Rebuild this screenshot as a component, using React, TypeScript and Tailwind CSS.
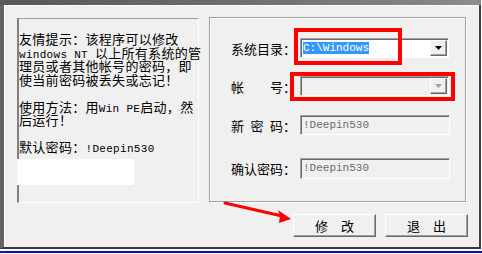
import React from "react";

const cjk = "font-['SimSun','Noto_Sans_CJK_SC',sans-serif]";

function Mono({ children }: { children: React.ReactNode }) {
  return <span className="font-['Liberation_Mono',monospace] text-[11px]">{children}</span>;
}

function Line({ children }: { children?: React.ReactNode }) {
  return <div className="h-[13.5px] leading-[13.5px]">{children}</div>;
}

function Label({ chars }: { chars: string[] }) {
  return (
    <div className="w-[69px] flex text-[13px] leading-[13px]">
      <span className="w-[52px] flex justify-between">
        {chars.map((c, i) => (
          <span key={i}>{c}</span>
        ))}
      </span>
      <span>：</span>
    </div>
  );
}

function DropButton({ disabled = false }: { disabled?: boolean }) {
  return (
    <div className="w-[17px] h-full bg-[#f0f0f0] border border-t-white border-l-white border-r-[#696969] border-b-[#696969] shadow-[inset_-1px_-1px_0_#a0a0a0] flex items-center justify-center">
      <svg width="7" height="4" viewBox="0 0 7 4">
        <polygon points="0,0 7,0 3.5,4" fill={disabled ? "#a0a0a0" : "#000"} />
      </svg>
    </div>
  );
}

function Combo({ disabled = false, children }: { disabled?: boolean; children?: React.ReactNode }) {
  return (
    <div
      className={`w-[149px] h-full flex border border-t-[#a0a0a0] border-l-[#a0a0a0] border-r-white border-b-white shadow-[inset_1px_1px_0_#696969] p-[1px] ${
        disabled ? "bg-[#f0f0f0]" : "bg-white"
      }`}
    >
      <div className="flex-1 flex items-center">{children}</div>
      <DropButton disabled={disabled} />
    </div>
  );
}

function Edit({ value }: { value: string }) {
  return (
    <div className="w-[150px] h-full flex items-center pl-[2px] bg-[#f0f0f0] border border-t-[#a0a0a0] border-l-[#a0a0a0] border-r-white border-b-white shadow-[inset_1px_1px_0_#696969] text-[#6d6d6d]">
      <Mono>{value}</Mono>
    </div>
  );
}

function WinButton({ children }: { children: React.ReactNode }) {
  return (
    <div className="w-[83px] h-[23px] bg-[#f0f0f0] border border-t-white border-l-white border-r-[#696969] border-b-[#696969] shadow-[inset_-1px_-1px_0_#a0a0a0] flex items-center justify-center text-[13px] leading-[13px]">
      {children}
    </div>
  );
}

export default function App() {
  return (
    <div className={`w-[482px] h-[254px] bg-white relative overflow-hidden text-black ${cjk}`}>
      <div className="w-[481px] h-[249px] flex flex-col">
        <div className="h-[5px] bg-gradient-to-r from-[#585858] via-[#6e6e6e] to-[#8c8c8c]" />
        <div className="flex-1 flex flex-col bg-[#f0f0f0] border-l-[4px] border-l-[#646464] border-r-[2px] border-r-[#404040] border-b-[2px] border-b-[#3a3a3a] shadow-[inset_1px_1px_0_#fff]">
          <div className="flex items-start pt-[12px] pl-[13px]">
            {/* left info box */}
            <div className="mt-[1px] w-[182px] h-[185px] border-t border-t-[#a0a0a0] border-l-2 border-l-[#808080] border-r border-r-white border-b border-b-white pt-[13px] text-[13px] tracking-[0.3px] whitespace-nowrap">
              <Line>友情提示：该程序可以修改</Line>
              <Line>
                <Mono>windows NT </Mono>以上所有系统的管
              </Line>
              <Line>理员或者其他帐号的密码，即</Line>
              <Line>使当前密码被丢失或忘记！</Line>
              <Line />
              <Line>
                使用方法：用<Mono>Win PE</Mono>启动，然
              </Line>
              <Line>后运行！</Line>
              <Line />
              <Line>
                默认密码：<Mono>!Deepin530</Mono>
              </Line>
            </div>

            {/* right form box */}
            <div className="ml-[10px] w-[257px] h-[185px] border border-[#a0a0a0] shadow-[inset_1px_1px_0_#fff,1px_1px_0_#fff] pl-[21px] pt-[20px] flex flex-col">
              <div className="flex items-center h-[20px]">
                <Label chars={["系", "统", "目", "录"]} />
                <Combo>
                  <span className="ml-[1px] bg-[#3399ff] text-white font-['Liberation_Mono',monospace] text-[11px] leading-[12px]">
                    {"C:\\Windows"}
                  </span>
                </Combo>
              </div>
              <div className="flex items-center h-[20px] mt-[18px]">
                <Label chars={["帐", "号"]} />
                <Combo disabled />
              </div>
              <div className="flex items-center h-[20px] mt-[19px]">
                <Label chars={["新", "密", "码"]} />
                <Edit value="!Deepin530" />
              </div>
              <div className="flex items-center h-[21px] mt-[23px]">
                <Label chars={["确", "认", "密", "码"]} />
                <Edit value="!Deepin530" />
              </div>
            </div>
          </div>

          <div className="flex justify-end gap-[9px] pr-[11px] mt-[11px]">
            <WinButton>修　改</WinButton>
            <WinButton>退　出</WinButton>
          </div>
        </div>
      </div>
      <div className="mt-[2px] h-[2px] bg-[#0a0ae0]" />

      {/* annotations */}
      <div className="absolute left-[17px] top-[159px] w-[117px] h-[26px] bg-white" />
      <div className="absolute left-[294px] top-[28px] w-[108px] h-[37px] border-[4px] border-[#f00]" />
      <div className="absolute left-[290px] top-[72px] w-[165px] h-[29px] border-[4px] border-[#f00]" />
      <svg className="absolute left-0 top-0 pointer-events-none" width="482" height="254">
        <line x1="225" y1="203" x2="282" y2="216" stroke="#f00" strokeWidth="3" strokeLinecap="round" />
        <polygon points="291,219 278,210 280,216 279,223" fill="#f00" />
      </svg>
    </div>
  );
}
